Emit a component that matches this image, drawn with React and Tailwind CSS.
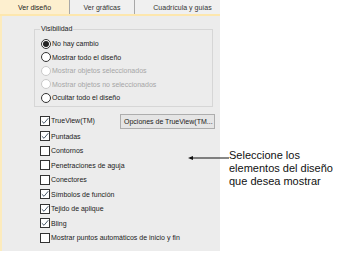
import React from "react";

const ui = { fontFamily: '"Liberation Sans", Arial, sans-serif' };

const Radio = ({ label, checked, disabled }) => (
  <div className="flex items-center h-[13.5px]">
    <span
      className={`w-[10px] h-[10px] rounded-full border flex items-center justify-center bg-white ${
        disabled ? "border-[#c9c9c9] bg-[#f4f4f4]" : "border-[#333333]"
      }`}
    >
      {checked && <span className="w-[6px] h-[6px] rounded-full bg-[#222222]" />}
    </span>
    <span className={`ml-[1px] ${disabled ? "text-[#a6a6a6]" : "text-[#1a1a1a]"}`}>{label}</span>
  </div>
);

const Check = ({ label, checked }) => (
  <div className="flex items-center h-[14.5px] shrink-0">
    <span className="w-[10px] h-[10px] border border-[#333333] bg-white flex items-center justify-center">
      {checked && (
        <svg width="8" height="8" viewBox="0 0 8 8">
          <path d="M0.8 4.2 L3 6.3 L7.3 1.2" fill="none" stroke="#4a5a6a" strokeWidth="1" />
        </svg>
      )}
    </span>
    <span className="ml-[1px] text-[#1a1a1a] whitespace-nowrap">{label}</span>
  </div>
);

export default function App() {
  return (
    <div className="w-[339px] h-[261px] bg-white flex items-start" style={ui}>
      <div className="w-[220px] h-[251px] bg-[#ececec] flex flex-col text-[7px] leading-none">
        {/* tabs */}
        <div className="flex h-[14px] shrink-0 bg-white">
          <div className="w-[70px] bg-[#fdefcf] border-r border-[#a8a8a8] flex items-center justify-center text-[#222]">
            Ver diseño
          </div>
          <div className="w-[65px] bg-[#f0f0f0] border-r border-[#a8a8a8] flex items-center justify-center text-[#333]">
            Ver gráficas
          </div>
          <div className="flex-1 bg-[#f0f0f0] flex items-center justify-center pl-[10px] text-[#333]">
            Cuadrícula y guías
          </div>
        </div>
        <div className="h-[2px] bg-[#fde7ae] shrink-0" />
        <div className="flex-1 flex flex-col border-l-2 border-[#fcebbd] pl-[32px]">
          {/* group box */}
          <div className="mt-[13px] w-[179px] h-[78px] border border-[#d6d6d6] relative flex flex-col pl-[6px] pt-[7px]">
            <span className="absolute -top-[5px] left-[5px] px-[1px] bg-[#ececec] text-[#1a1a1a]">Visibilidad</span>
            <Radio label="No hay cambio" checked />
            <Radio label="Mostrar todo el diseño" />
            <Radio label="Mostrar objetos seleccionados" disabled />
            <Radio label="Mostrar objetos no seleccionados" disabled />
            <Radio label="Ocultar todo el diseño" />
          </div>
          {/* checkboxes */}
          <div className="mt-[5px] pl-[6px] flex flex-col">
            <div className="flex items-center">
              <div className="w-[80px]">
                <Check label="TrueView(TM)" checked />
              </div>
              <div className="w-[95px] h-[15px] mt-[2px] border border-[#adadad] bg-[#e5e5e5] flex items-center pl-[3px] text-[#1a1a1a] whitespace-nowrap overflow-hidden">
                Opciones de TrueView(TM...
              </div>
            </div>
            <Check label="Puntadas" checked />
            <Check label="Contornos" />
            <Check label="Penetraciones de aguja" />
            <Check label="Conectores" />
            <Check label="Símbolos de función" checked />
            <Check label="Tejido de aplique" checked />
            <Check label="Bling" checked />
            <Check label="Mostrar puntos automáticos de inicio y fin" />
          </div>
        </div>
      </div>
      <div className="flex items-start mt-[149px]">
        <svg width="42" height="18" viewBox="0 0 42 18" className="-ml-[32px] shrink-0">
          <line x1="2" y1="9" x2="41" y2="9" stroke="#111" strokeWidth="1" />
          <path d="M0 9 L5 7 L5 11 Z" fill="#111" />
        </svg>
        <div className="ml-[-1px] text-[11px] leading-[13px] text-[#111]" style={{ fontFamily: '"Liberation Sans", Arial, sans-serif' }}>
          Seleccione los
          <br />
          elementos del diseño
          <br />
          que desea mostrar
        </div>
      </div>
    </div>
  );
}
